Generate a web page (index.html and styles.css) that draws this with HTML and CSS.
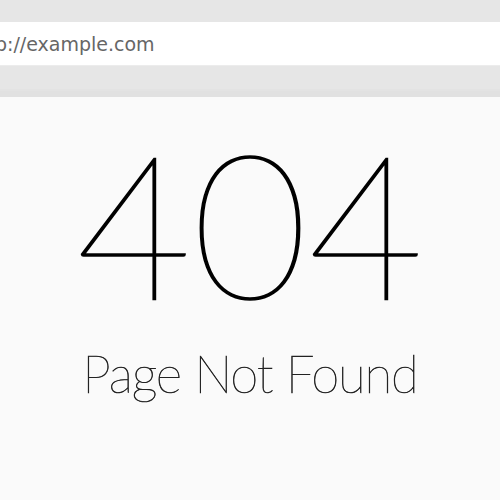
FILE: index.html
```html
<!DOCTYPE html>
<html>
<head>
<meta charset="utf-8">
<link rel="stylesheet" href="styles.css">
</head>
<body>
<div class="browser">
  <div class="toolbar">
    <div class="address"><span class="url">http://example.com</span></div>
  </div>
  <main class="content">
    <div class="code">404</div>
    <div class="message">Page Not Found</div>
  </main>
</div>
</body>
</html>
```
FILE: styles.css
```css
html, body {
  margin: 0;
  padding: 0;
  width: 500px;
  height: 500px;
  overflow: hidden;
  background: #fafafa;
}
.browser {
  display: flex;
  flex-direction: column;
  height: 500px;
}
.toolbar {
  background: #e6e6e6;
  padding: 22px 0 25px;
  border-bottom: 6px solid #e1e1e1;
  box-shadow: inset 0 -2px 0 #e3e3e3;
}
.address {
  background: #ffffff;
  height: 43px;
  margin-left: -32px;
  display: flex;
  align-items: center;
  font-family: "DejaVu Sans", sans-serif;
  font-size: 19px;
  color: #666666;
  border-bottom: 1px solid #ececec;
}
.content {
  flex: 1;
  background: #fafafa;
  display: flex;
  flex-direction: column;
  align-items: center;
  padding-top: 25px;
}
.code {
  font-family: "Lato", "Roboto", sans-serif;
  font-weight: 100;
  font-size: 200px;
  line-height: 200px;
  color: #000;
  -webkit-text-stroke: 1.6px #000;
}
.message {
  font-family: "Lato", "Roboto", sans-serif;
  font-weight: 100;
  font-size: 51px;
  line-height: 60px;
  letter-spacing: -1.2px;
  color: #222;
  -webkit-text-stroke: 0.6px #222;
  margin-top: 22px;
}
```
